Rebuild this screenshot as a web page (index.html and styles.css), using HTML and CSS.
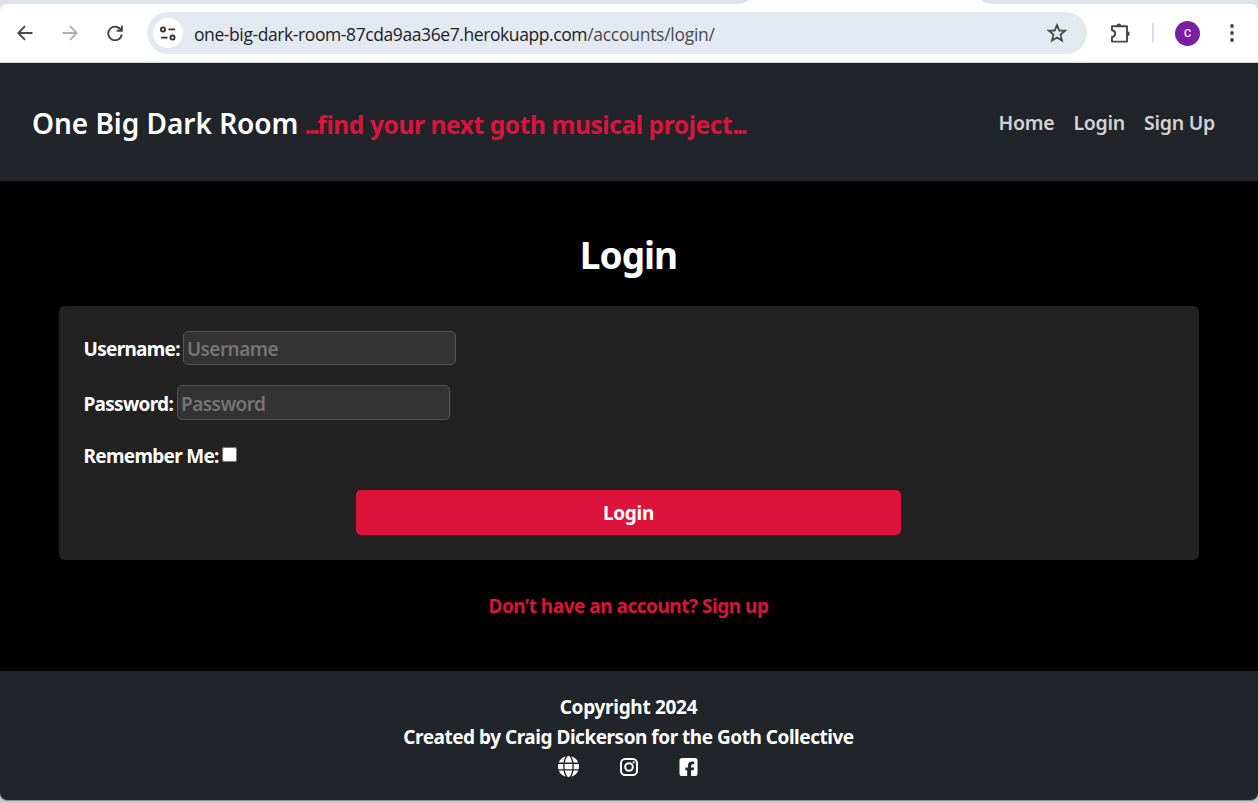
FILE: index.html
```
<!DOCTYPE html>
<html lang="en">
<head>
<meta charset="utf-8">
<title>One Big Dark Room - Login</title>
<link rel="stylesheet" href="styles.css">
</head>
<body>
<div class="window">
  <div class="tabstrip"><span class="tab-left"></span><span class="tab-right"></span></div>
  <div class="toolbar">
    <svg class="nav-icon back" viewBox="0 0 16 16"><path d="M15.500 8H1.600M8 1.200 1.300 8 8 14.800"/></svg>
    <svg class="nav-icon forward" viewBox="0 0 16 16"><path d="M.5 8h13.900M8 1.200 14.700 8 8 14.800"/></svg>
    <svg class="nav-icon reload" viewBox="0 0 16 16"><path d="M14 5.100A6.800 6.800 0 1 0 14.800 9.500M14.900.6v5.200H9.600"/></svg>
    <div class="omnibox">
      <span class="site-info"><svg class="tune" viewBox="0 0 16 15"><circle cx="3" cy="3.400" r="2.100"/><path d="M8.500 3.400H15M1 11.600h6.500"/><circle cx="12.500" cy="11.600" r="2.100"/></svg></span>
      <span class="url"><span class="host">one-big-dark-room-87cda9aa36e7.herokuapp.com</span><span class="path">/accounts/login/</span></span>
      <svg class="star" viewBox="0 0 18 18"><path d="m9 1.900 2.100 5h5.200l-4.100 3.600 1.300 5.300L9 13l-4.500 2.800 1.300-5.300L1.700 6.900h5.200z"/></svg>
    </div>
    <svg class="puzzle" viewBox="0 0 22 22"><path class="outline" d="M3 4.300h15v15.300H3V15c4.200-.5 4.200-6.300 0-6.800z"/><path class="knob" d="M7.500 4a2.400 2.600 0 0 1 4.800 0zM18 9.200a2.600 2.400 0 0 1 0 5z"/></svg>
    <span class="divider"></span>
    <span class="avatar">C</span>
    <svg class="more" viewBox="0 0 4 18"><circle cx="2" cy="2" r="1.900"/><circle cx="2" cy="9" r="1.900"/><circle cx="2" cy="16" r="1.900"/></svg>
  </div>
  <header class="site-header">
    <div class="brand"><span class="brand-name">One Big Dark Room</span><span class="tagline"><span class="dots">...</span>find your next goth musical project<span class="dots">...</span></span></div>
    <nav class="site-nav"><a>Home</a><a>Login</a><a>Sign Up</a></nav>
  </header>
  <main>
    <h1>Login</h1>
    <form class="card">
      <div class="row"><label class="field-label" for="user">Username:</label><input class="text-input" id="user" type="text" placeholder="Username"></div>
      <div class="row tall"><label class="field-label" for="pass">Password:</label><input class="text-input" id="pass" type="password" placeholder="Password"></div>
      <div class="row remember"><label class="field-label" for="rem">Remember Me:</label><input class="check" id="rem" type="checkbox"></div>
      <button class="submit" type="button">Login</button>
    </form>
    <a class="signup-link">Don’t have an account? Sign up</a>
  </main>
  <footer>
    <p class="copyright">Copyright 2024</p>
    <p class="credit">Created by Craig Dickerson for the Goth Collective</p>
    <div class="social">
      <svg class="globe" viewBox="0 0 512 512"><path d="M352 256c0 22.200-1.200 43.600-3.300 64H163.300c-2.200-20.400-3.300-41.800-3.300-64s1.200-43.600 3.300-64h185.400c2.200 20.400 3.300 41.800 3.300 64zm28.800-64h123.100c5.300 20.500 8.100 41.900 8.100 64s-2.800 43.500-8.100 64H380.800c2.100-20.600 3.200-42 3.200-64s-1.100-43.400-3.200-64zm112.600-32H376.700c-10-63.900-29.800-117.400-55.300-151.600 78.300 20.700 142 77.500 172 151.600zm-149.100 0H167.700c6.100-36.400 15.500-68.600 27-94.700 10.500-23.600 22.200-40.700 33.500-51.500C239.400 3.200 248.700 0 256 0s16.600 3.200 27.800 13.800c11.300 10.800 23 27.900 33.500 51.500 11.600 26 20.900 58.200 27 94.700zm-209 0H18.600C48.600 85.900 112.200 29.100 190.600 8.400 165.100 42.600 145.300 96.100 135.300 160zM8.100 192h123.100c-2.100 20.600-3.200 42-3.200 64s1.100 43.400 3.200 64H8.100C2.800 299.500 0 278.100 0 256s2.800-43.500 8.100-64zm186.600 254.600c-11.600-26-20.900-58.200-27-94.600h176.600c-6.100 36.400-15.500 68.600-27 94.600-10.500 23.600-22.200 40.700-33.500 51.500C272.600 508.800 263.300 512 256 512s-16.600-3.200-27.800-13.800c-11.300-10.800-23-27.900-33.500-51.600zM135.300 352c10 63.900 29.800 117.400 55.300 151.600C112.200 482.900 48.600 426.100 18.600 352h116.700zm358.100 0c-30 74.100-93.600 130.900-171.900 151.600 25.500-34.200 45.200-87.700 55.300-151.600h116.600z"/></svg>
      <svg class="instagram" viewBox="0 0 18 18"><rect x="1" y="1" width="16" height="16" rx="4.300"/><circle cx="9" cy="9" r="3.800"/><circle class="lens" cx="13.700" cy="4.300" r="1.100"/></svg>
      <svg class="facebook" viewBox="0 0 18 18"><path d="M2.600 0h12.800A2.600 2.600 0 0 1 18 2.600v12.800a2.600 2.600 0 0 1-2.600 2.600h-3.800v-5.700h2.500l.5-2.800h-3V8.400c0-1.500.6-2.100 2.100-2.100h1V3.700c-.5-.1-1.400-.2-2.100-.2-2.700 0-4 1.300-4 4.100v1.900H5.800v2.800h1.900V18H2.600A2.600 2.600 0 0 1 0 15.400V2.600A2.600 2.600 0 0 1 2.600 0z"/></svg>
    </div>
  </footer>
</div>
</body>
</html>
```
FILE: styles.css
```
* { box-sizing: border-box; }
body { margin: 0; height: 803px; overflow: hidden; background: #c9c9cb; color: #fff; font: 700 19px/30px "Noto Sans", sans-serif; }
p, h1 { margin: 0; }
.window { height: 800px; display: flex; flex-direction: column; background: #dde3ea; border-radius: 0 0 7px 7px; overflow: hidden; box-shadow: 0 1px 0 #8f8c90; }

/* Browser chrome */
.tabstrip { height: 4px; display: flex; justify-content: space-between; background: #fff; }
.tab-left { width: 748px; background: #dde3ea; border-bottom-right-radius: 14px 4px; }
.tab-right { width: 276px; background: #dde3ea; border-bottom-left-radius: 14px 4px; }
.toolbar { height: 59px; display: flex; align-items: center; padding: 0 24px 0 17px; background: #fff; border-bottom: 1px solid #d5dade; border-radius: 7px 7px 0 0; }
.nav-icon { width: 16px; height: 16px; fill: none; stroke: #474747; stroke-width: 1.9; margin-right: 29px; }
.forward { stroke: #b0b0b0; }
.reload { margin-right: 24px; }
.omnibox { width: 940px; height: 42px; border-radius: 21px; background: #e4e9f1; display: flex; align-items: center; padding: 0 21px 0 6px; }
.site-info { width: 30px; height: 30px; border-radius: 50%; background: #fff; display: flex; align-items: center; justify-content: center; }
.tune { width: 16px; height: 15px; fill: none; stroke: #303030; stroke-width: 1.8; }
.url { flex: 1; margin-left: 11px; padding-top: 1px; color: #202124; font: 400 17.5px/24px "Open Sans", sans-serif; white-space: nowrap; }
.host { letter-spacing: -.41px; }
.path { letter-spacing: -.27px; color: #474a4f; }
.star { width: 20px; height: 20px; margin-right: -1px; fill: none; stroke: #474747; stroke-width: 1.6; }
.puzzle { width: 22px; height: 22px; margin-left: 22px; }
.outline { fill: none; stroke: #474747; stroke-width: 1.9; stroke-linejoin: round; }
.knob { fill: #474747; }
.divider { width: 2px; height: 20px; margin-left: 21px; background: #d0e1fb; }
.avatar { width: 25px; height: 25px; margin-left: 21px; border-radius: 50%; background: #7b1fa2; font: 500 11px/25px Roboto, sans-serif; text-align: center; }
.more { width: 4px; height: 18px; margin-left: auto; fill: #474747; }

/* Site header */
.site-header { height: 118px; padding: 0 43px 0 32px; display: flex; align-items: center; justify-content: space-between; background: #212529; }
.brand { display: flex; align-items: baseline; gap: 6px; padding-top: 1px; white-space: nowrap; }
.brand-name { font-size: 28px; font-weight: 600; line-height: 40px; letter-spacing: -.03px; }
.tagline { color: #dc143c; font-size: 24.5px; letter-spacing: -.4px; }
.dots { letter-spacing: -2.600px; }
.site-nav { display: flex; gap: 19px; padding-top: 2px; color: #d3d3d3; font-weight: 600; font-size: 19.5px; letter-spacing: -.25px; }

/* Login form */
main { height: 490px; padding: 51px 59px 0; background: #000; display: flex; flex-direction: column; }
h1 { font-size: 37px; line-height: 46px; text-align: center; letter-spacing: -1px; padding-right: 1px; }
.card { margin: 28px 0 31px; height: 254px; padding: 25px; display: flex; flex-direction: column; gap: 20px; border-radius: 6px; background: #222; }
.row { height: 34px; display: flex; align-items: center; gap: 3px; }
.tall { height: 35px; gap: 4px; }
.remember { height: 30px; gap: 3px; }
.field-label { padding-top: 2px; margin-left: -.5px; letter-spacing: -.7px; }
.text-input { width: 273px; height: 100%; margin: 0; padding: 2px 3px 1px; border: 1px solid #555; border-radius: 5px; background: #333; color: #fff; font: inherit; font-weight: 600; letter-spacing: -.55px; }
.tall .text-input { padding: 3px 3px 0; }
.text-input::placeholder { color: #757575; opacity: 1; }
.check { width: 15px; height: 15px; margin: 0 0 1px; }
.submit { width: 545px; height: 45px; margin-right: 1px; align-self: center; border: 0; border-radius: 5px; background: #dc143c; color: #fff; font: inherit; letter-spacing: -.3px; }
.signup-link { align-self: center; margin-right: 1px; color: #dc143c; letter-spacing: -.48px; }

/* Site footer */
footer { height: 129px; padding-top: 21px; background: #212529; text-align: center; }
.copyright { padding-right: 1px; letter-spacing: -.3px; }
.credit { padding-right: 1px; letter-spacing: -.48px; }
.social { display: flex; justify-content: center; align-items: center; gap: 41px; height: 29px; padding-right: 2px; fill: #fff; }
.globe { width: 21px; height: 21px; }
.instagram { width: 18px; height: 18px; fill: none; stroke: #fff; stroke-width: 2; }
.lens { fill: #fff; stroke: none; }
.facebook { width: 19px; height: 18px; }
```
